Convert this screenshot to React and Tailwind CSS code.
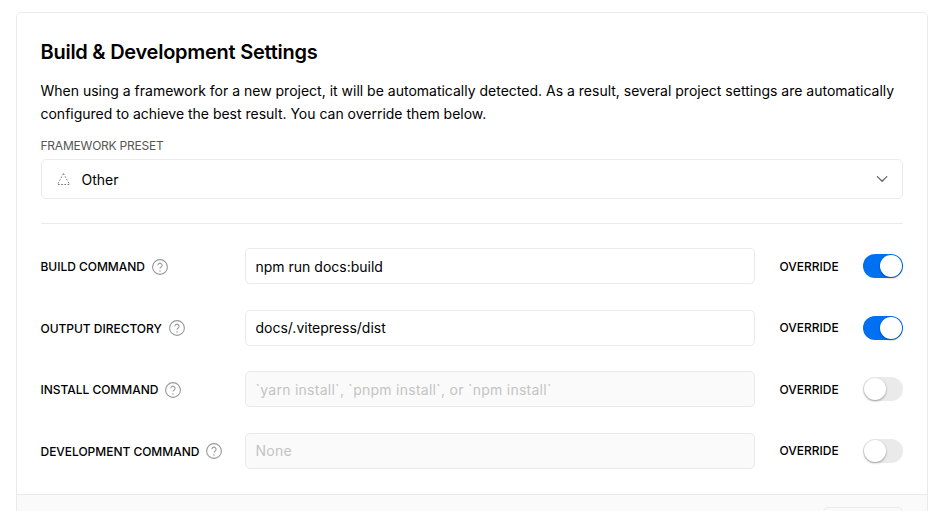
import React from 'react';

const rows = [
  { label: 'BUILD COMMAND', value: 'npm run docs:build', on: true },
  { label: 'OUTPUT DIRECTORY', value: 'docs/.vitepress/dist', on: true },
  { label: 'INSTALL COMMAND', placeholder: '`yarn install`, `pnpm install`, or `npm install`', on: false },
  { label: 'DEVELOPMENT COMMAND', placeholder: 'None', on: false },
];

function HelpIcon() {
  return (
    <svg className="-mt-px ml-[7px] size-4 shrink-0 overflow-visible" viewBox="0 0 16 16" fill="none" stroke="#999">
      <circle cx="8" cy="8" r="7.4" strokeWidth="1.1" />
      <path d="M5.9 6.3a2.1 2.1 0 1 1 3.3 1.7C8.4 8.4 8 8.7 8 9.6" strokeWidth="1.1" />
      <circle cx="8" cy="11.9" r=".75" fill="#999" stroke="none" />
    </svg>
  );
}

function Toggle({ on }) {
  return (
    <div className={on ? 'flex h-6 w-10 items-center justify-end rounded-full bg-[#0070f3] px-px' : 'flex h-6 w-10 items-center rounded-full bg-[#eaeaea] px-px'}>
      <div className="size-[22px] rounded-full bg-white shadow-[0_1px_2px_rgba(0,0,0,0.25),0_1px_3px_rgba(0,0,0,0.12)]" />
    </div>
  );
}

function SettingRow({ label, value, placeholder, on }) {
  return (
    <div className="flex h-9 items-center">
      <div className="flex w-[204px] shrink-0 items-center pt-[2px]">
        <span className="-ml-[0.5px] whitespace-nowrap text-[12px] font-medium leading-4 tracking-[-0.03px]">{label}</span>
        <HelpIcon />
      </div>
      <input
        readOnly
        disabled={!on}
        defaultValue={value}
        placeholder={placeholder}
        className="h-9 w-[510px] shrink-0 rounded-[5px] border border-[#eaeaea] bg-white px-[9.5px] text-[14px] text-black outline-none placeholder:text-[#c4c4c4] placeholder:opacity-100 disabled:bg-[#fafafa] disabled:tracking-[0.26px]"
      />
      <span className="ml-[24.5px] flex-1 pt-px text-[12px] font-medium leading-4">OVERRIDE</span>
      <Toggle on={on} />
    </div>
  );
}

export default function App() {
  return (
    <main className="h-[511px] w-[942px] overflow-hidden bg-white px-4 pt-3 font-['Inter',sans-serif] text-black">
      <section className="h-[600px] w-[912px] overflow-hidden rounded-[5px] border border-[#eaeaea]">
        <div className="h-[481px] px-6 pt-6">
          <h2 className="-ml-[0.5px] text-[20px] font-semibold leading-[30px] tracking-[-0.26px]">Build &amp; Development Settings</h2>
          <p className="-ml-[0.5px] mt-3 whitespace-nowrap text-[14px] leading-[23px]">
            When using a framework for a new project, it will be automatically detected. As a result, several project settings are automatically<br />
            <span className="tracking-[-0.01px]">configured to achieve the best result. You can override them below.</span>
          </p>
          <div className="-ml-[0.5px] mt-[13px] text-[12px] leading-4 tracking-[-0.22px] text-[#555]">FRAMEWORK PRESET</div>
          <div className="mt-[5px] flex h-10 items-center rounded-[5px] border border-[#eaeaea] pl-[14.5px] pr-3">
            <svg className="h-[12px] w-[13px]" viewBox="0 0 13 12" fill="none" stroke="#777" strokeWidth="1" strokeDasharray="1.6 1.6">
              <path d="M6.5 .5 12.5 11.5H.5Z" />
            </svg>
            <span className="ml-3 flex-1 pt-px text-[14px] leading-5">Other</span>
            <svg className="size-4" viewBox="0 0 16 16" fill="none" stroke="#666" strokeWidth="1.3" strokeLinecap="round" strokeLinejoin="round">
              <path d="m3.4 5.6 4.7 4.7 4.7-4.7" />
            </svg>
          </div>
          <div className="mt-6 h-px bg-[#eaeaea]" />
          <div className="mt-[24.1px] flex flex-col gap-[25.6px]">
            {rows.map((row) => <SettingRow key={row.label} {...row} />)}
          </div>
        </div>
        <footer className="flex h-[100px] justify-end border-t border-[#eaeaea] bg-[#fafafa] px-6 pt-3">
          <div className="h-8 w-20 rounded-[5px] border border-[#eaeaea] bg-[#fafafa]" />
        </footer>
      </section>
    </main>
  );
}
